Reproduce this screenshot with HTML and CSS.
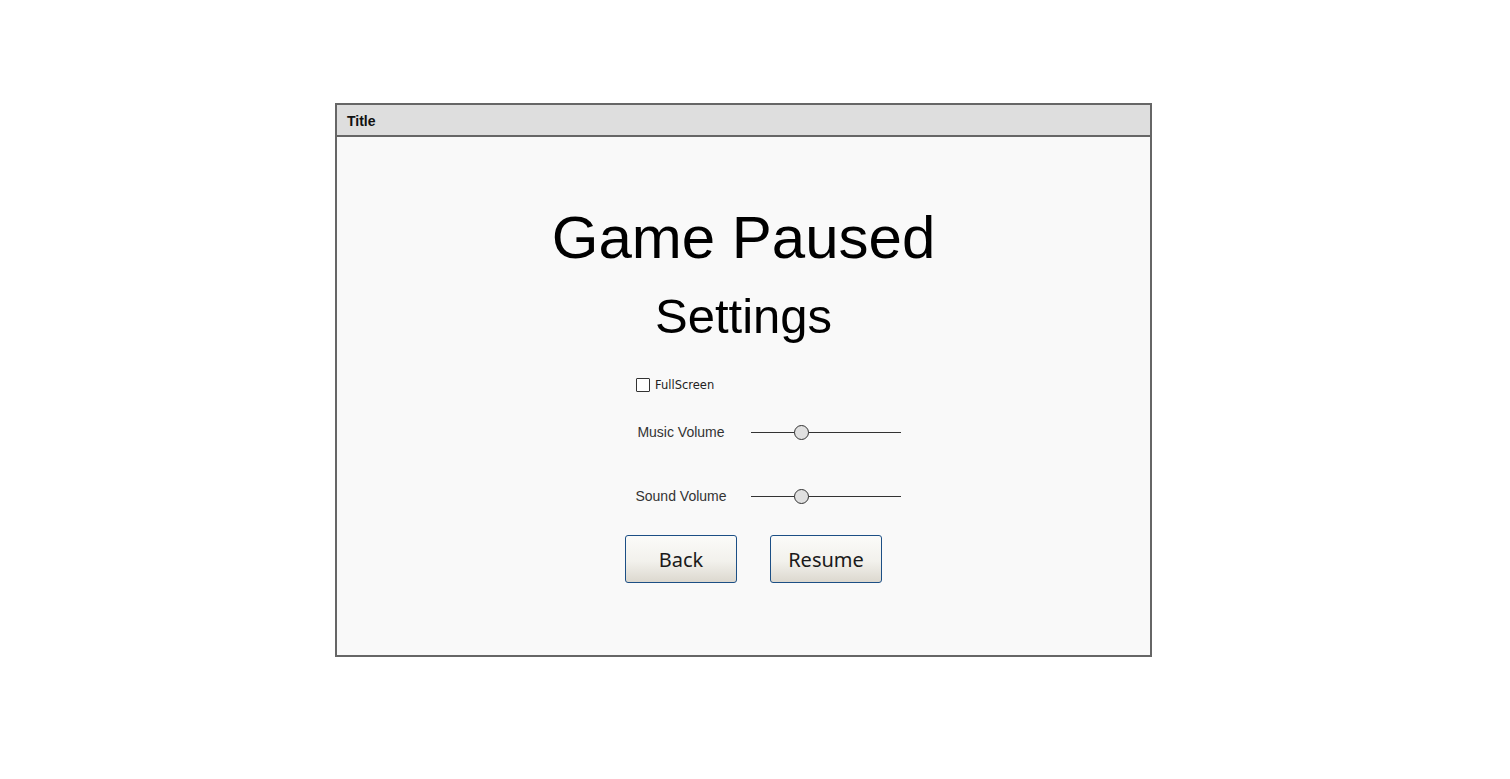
FILE: index.html
```html
<!DOCTYPE html>
<html>
<head>
<meta charset="utf-8">
<link rel="stylesheet" href="styles.css">
</head>
<body>
<div class="window">
  <div class="titlebar">Title</div>
  <div class="panel">
    <h1 class="heading">Game Paused</h1>
    <h2 class="subheading">Settings</h2>
    <div class="settings">
      <label class="check-row"><span class="checkbox"></span><span class="check-label">FullScreen</span></label>
      <div class="slider-row">
        <span class="slider-label">Music Volume</span>
        <div class="slider"><span class="track"></span><span class="thumb"></span></div>
      </div>
      <div class="slider-row second">
        <span class="slider-label">Sound Volume</span>
        <div class="slider"><span class="track"></span><span class="thumb"></span></div>
      </div>
    </div>
    <div class="buttons">
      <button class="btn">Back</button>
      <button class="btn">Resume</button>
    </div>
  </div>
</div>
</body>
</html>
```

FILE: styles.css
```css
html, body {
  margin: 0;
  padding: 0;
  background: #ffffff;
}
body {
  font-family: "Liberation Sans", Arial, sans-serif;
}
.window {
  margin: 103px 0 0 335px;
  width: 813px;
  height: 550px;
  border: 2px solid #666666;
  display: flex;
  flex-direction: column;
  background: #f9f9f9;
}
.titlebar {
  height: 30px;
  line-height: 32px;
  background: #dedede;
  border-bottom: 2px solid #666666;
  padding-left: 10px;
  font-size: 14px;
  font-weight: bold;
  color: #111;
}
.panel {
  flex: 1;
  display: flex;
  flex-direction: column;
  padding-top: 71px;
}
.heading {
  margin: 0;
  font-weight: normal;
  font-size: 60px;
  line-height: 60px;
  text-align: center;
  color: #000;
}
.subheading {
  margin: 24px 0 0 0;
  font-weight: normal;
  font-size: 49px;
  line-height: 48px;
  text-align: center;
  color: #000;
}
.settings {
  margin: 38px 0 0 298px;
  width: 266px;
  display: flex;
  flex-direction: column;
}
.check-row {
  display: flex;
  align-items: center;
  height: 14px;
  margin-left: 1px;
}
.checkbox {
  width: 12px;
  height: 12px;
  border: 1px solid #333;
  background: #fff;
  border-radius: 1px;
}
.check-label {
  margin-left: 5px;
  font-family: "DejaVu Sans", sans-serif;
  font-size: 11.5px;
  color: #222;
}
.slider-row {
  display: grid;
  grid-template-columns: 92px 150px;
  column-gap: 24px;
  align-items: center;
  height: 16px;
  margin-top: 32px;
}
.slider-row.second {
  margin-top: 48px;
}
.slider-label {
  text-align: center;
  font-size: 14px;
  color: #333;
  white-space: nowrap;
}
.slider {
  position: relative;
  height: 16px;
}
.track {
  position: absolute;
  left: 0;
  right: 0;
  top: 8px;
  height: 1px;
  background: #333;
}
.thumb {
  position: absolute;
  left: 43px;
  top: 1px;
  width: 13px;
  height: 13px;
  border: 1px solid #333;
  border-radius: 50%;
  background: #e0e0e0;
}
.buttons {
  display: flex;
  gap: 33px;
  margin: 31px 0 0 288px;
}
.btn {
  width: 112px;
  height: 48px;
  border: 1px solid #1c4f85;
  border-radius: 3px;
  background: linear-gradient(to bottom, #fbfbf9 0%, #f2f1ec 55%, #dcd8cf 100%);
  font-family: "Noto Sans", "Open Sans", sans-serif;
  font-size: 20px;
  color: #1a1a1a;
  padding: 0;
}
```
